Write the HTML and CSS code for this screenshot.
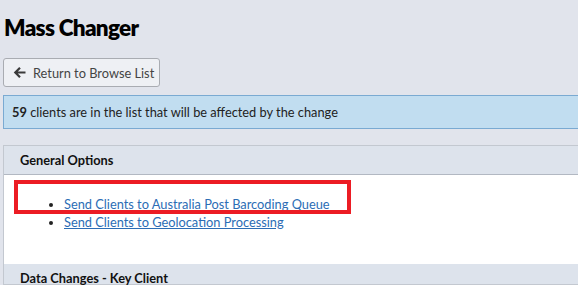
FILE: index.html
```html
<!DOCTYPE html>
<html>
<head>
<meta charset="utf-8">
<link rel="stylesheet" href="styles.css">
</head>
<body>
<div class="page">
  <h1 class="title">Mass Changer</h1>
  <button class="back-btn">
    <svg class="arrow" width="13" height="13" viewBox="0 0 13 13"><path d="M12.5 6.5H2.5M7 1.8L2.3 6.5L7 11.2" fill="none" stroke="#3a3a3a" stroke-width="2.2" stroke-linejoin="miter"/></svg>
    <span>Return to Browse List</span>
  </button>
  <div class="alert"><b>59</b> clients are in the list that will be affected by the change</div>
  <div class="panel">
    <div class="panel-head">General Options</div>
    <div class="panel-body">
      <ul class="links">
        <li><a href="#">Send Clients to Australia Post Barcoding Queue</a></li>
        <li><a href="#">Send Clients to Geolocation Processing</a></li>
      </ul>
      <div class="highlight"></div>
    </div>
    <div class="panel-head second">Data Changes - Key Client</div>
  </div>
</div>
</body>
</html>
```
FILE: styles.css
```css
html, body {
  margin: 0;
  padding: 0;
  background: #e1e4ec;
  overflow: hidden;
  font-family: "Lato", "Liberation Sans", sans-serif;
  color: #222;
}
.page {
  padding: 12px 0 0 3px;
}
.title {
  margin: 0 0 0 1px;
  font-size: 22.5px;
  line-height: 32px;
  font-weight: 800;
  color: #000;
  letter-spacing: -0.7px;
}
.back-btn {
  display: flex;
  align-items: center;
  gap: 7px;
  margin-top: 14px;
  height: 29px;
  width: 157px;
  padding: 0 0 0 9px;
  background: #eef0f4;
  border: 1px solid #a9acb2;
  border-radius: 3px;
  font-family: inherit;
  font-size: 12.8px;
  color: #444;
  white-space: nowrap;
}
.arrow { flex: none; }
.alert {
  margin-top: 8px;
  height: 32px;
  line-height: 32px;
  padding-left: 8px;
  background: #c1ddf0;
  border: 1px solid #7aaad2;
  border-right: none;
  font-size: 12.8px;
  color: #222;
}
.panel {
  margin-top: 16px;
  border: 1px solid #c3c8d0;
  border-right: none;
}
.panel-head {
  height: 28px;
  line-height: 28px;
  padding-left: 16px;
  background: #dde3ec;
  border-bottom: 1px solid #b2b8c2;
  font-weight: 700;
  font-size: 12.8px;
  color: #111;
}
.panel-head.second { border-bottom: none; height: 20px; line-height: 29px; }
.panel-body {
  position: relative;
  background: #fff;
  height: 89px;
}
.links {
  margin: 0;
  padding: 20px 0 0 60px;
  font-size: 12.8px;
  line-height: 18px;
  color: #222;
}
.links a {
  color: #2c6db5;
  text-decoration: underline;
}
.highlight {
  position: absolute;
  left: 10px;
  top: 5px;
  width: 329px;
  height: 26px;
  border: 4px solid #ec1c24;
}
```
